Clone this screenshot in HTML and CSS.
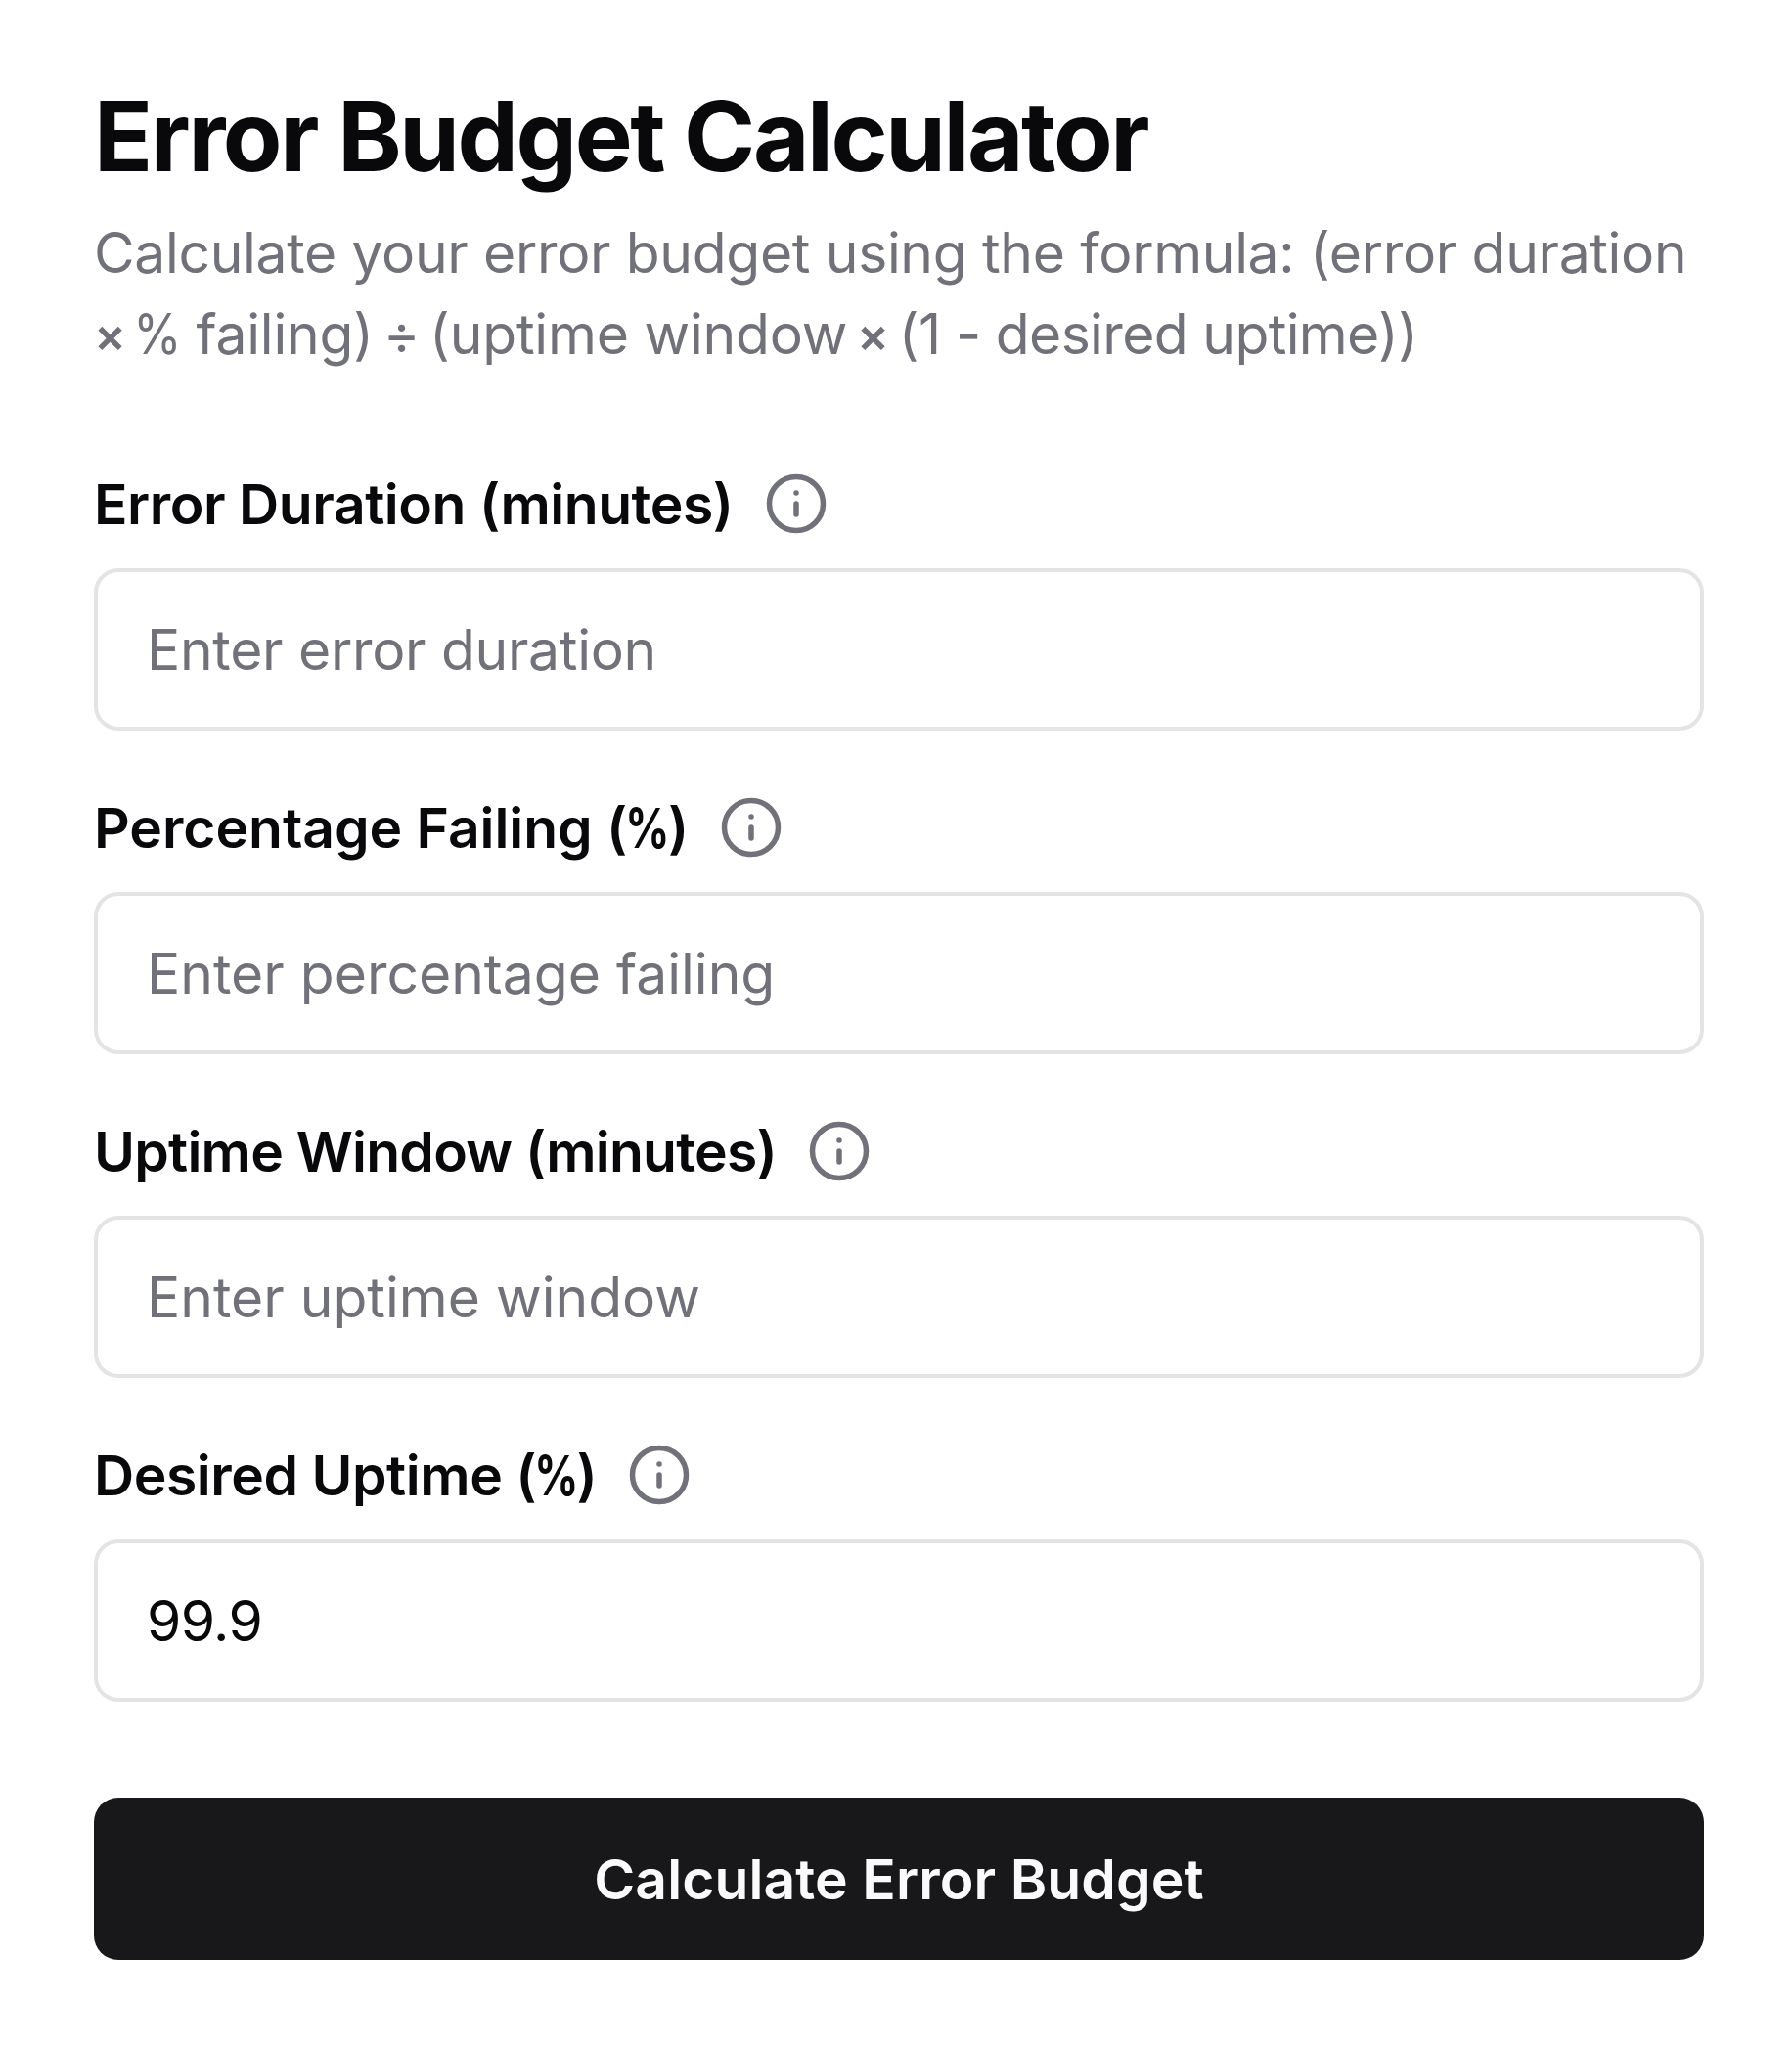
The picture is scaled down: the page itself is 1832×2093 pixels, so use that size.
FILE: index.html
```html
<!DOCTYPE html>
<html lang="en">
<head>
    <meta charset="UTF-8">
    <meta name="viewport" content="width=device-width, initial-scale=1.0">
    <title>Error Budget Calculator</title>
    <link rel="stylesheet" href="styles.css">
</head>
<body>
    <main class="container">
        <div class="header">
            <h1 class="title">Error Budget Calculator</h1>
            <p class="description">
                Calculate your error budget using the formula: (error duration<br>
                <span class="formula-end"><span class="times">×</span> <span class="percent">%</span> failing)<span class="operator"> ÷ </span>(uptime window<span class="operator"> <span class="times">×</span> </span><span class="desired">(1 - desired uptime))</span></span>
            </p>
        </div>

        <form class="form">
            <div class="field">
                <div class="label-row">
                    <label class="label label-duration" for="duration">Error Duration (minutes)</label>
                    <svg class="info-icon" viewBox="0 0 24 24"><circle cx="12" cy="12" r="10"/><path d="M12 16v-4"/><path d="M12 8h.01"/></svg>
                </div>
                <input class="input input-duration" id="duration" type="text" placeholder="Enter error duration">
            </div>
            <div class="field">
                <div class="label-row">
                    <label class="label label-failing" for="failing">Percentage Failing (<span class="percent">%</span>)</label>
                    <svg class="info-icon" viewBox="0 0 24 24"><circle cx="12" cy="12" r="10"/><path d="M12 16v-4"/><path d="M12 8h.01"/></svg>
                </div>
                <input class="input" id="failing" type="text" placeholder="Enter percentage failing">
            </div>
            <div class="field">
                <div class="label-row">
                    <label class="label label-window" for="window">Uptime Window (minutes)</label>
                    <svg class="info-icon" viewBox="0 0 24 24"><circle cx="12" cy="12" r="10"/><path d="M12 16v-4"/><path d="M12 8h.01"/></svg>
                </div>
                <input class="input" id="window" type="text" placeholder="Enter uptime window">
            </div>
            <div class="field">
                <div class="label-row">
                    <label class="label label-uptime" for="uptime">Desired Uptime (<span class="percent">%</span>)</label>
                    <svg class="info-icon" viewBox="0 0 24 24"><circle cx="12" cy="12" r="10"/><path d="M12 16v-4"/><path d="M12 8h.01"/></svg>
                </div>
                <input class="input input-uptime" id="uptime" type="text" value="99.9">
            </div>
            <button class="submit-button" type="button">Calculate Error Budget</button>
        </form>
    </main>
</body>
</html>
```
FILE: styles.css
```css
* {
    margin: 0;
    padding: 0;
    box-sizing: border-box;
}

body {
    background-color: #ffffff;
    color: #09090b;
    font-family: Inter, "Liberation Sans", sans-serif;
    font-size: 57px;
    font-weight: 400;
}

.container {
    padding: 90px 90px 88px 96px;
}

/* Header */
.title {
    font-size: 99px;
    font-weight: 700;
    line-height: 99px;
    letter-spacing: -2.4px;
}

.description {
    margin-top: 29px;
    color: #71717a;
    line-height: 82.7px;
    letter-spacing: -0.34px;
    white-space: nowrap;
}

.formula-end {
    letter-spacing: -0.2px;
}

.operator {
    word-spacing: -6px;
}

.desired {
    letter-spacing: -0.65px;
}

.times {
    font-size: 49px;
    font-weight: 600;
    line-height: 1;
    vertical-align: 2px;
    letter-spacing: -7px;
}

.operator .times {
    letter-spacing: 0;
}

/* Narrower percent sign */
.percent {
    display: inline-block;
    margin: 0 -4.5px;
    transform: scaleX(0.88);
}

/* Form */
.form {
    display: flex;
    flex-direction: column;
    margin-top: 99px;
}

.field {
    height: 331px;
}

.label-row {
    display: flex;
    align-items: center;
    gap: 31px;
    height: 66px;
    margin-bottom: 33px;
}

.label {
    font-weight: 600;
    letter-spacing: -0.45px;
    white-space: nowrap;
}

.label .percent {
    margin: 0 -8px;
    font-weight: 700;
    transform: scaleX(0.78);
}

.label-failing {
    letter-spacing: -0.05px;
}

.label-window {
    letter-spacing: -0.75px;
}

.info-icon {
    width: 66px;
    height: 66px;
    fill: none;
    stroke: #71717a;
    stroke-width: 2;
    stroke-linecap: round;
    stroke-linejoin: round;
}

.input {
    display: block;
    width: 100%;
    height: 166px;
    padding: 0 50px;
    border: 4px solid #e4e4e7;
    border-radius: 25px;
    background-color: #ffffff;
    color: #09090b;
    font: inherit;
    outline: none;
}

.input-duration {
    letter-spacing: -0.3px;
}

.input-uptime {
    letter-spacing: -0.6px;
}

.input::placeholder {
    color: #71717a;
    opacity: 1;
}

.submit-button {
    height: 166px;
    margin-top: 32px;
    border: none;
    border-radius: 25px;
    background-color: #18181b;
    color: #fafafa;
    font: inherit;
    font-weight: 600;
    letter-spacing: 0.1px;
    cursor: pointer;
}
```
